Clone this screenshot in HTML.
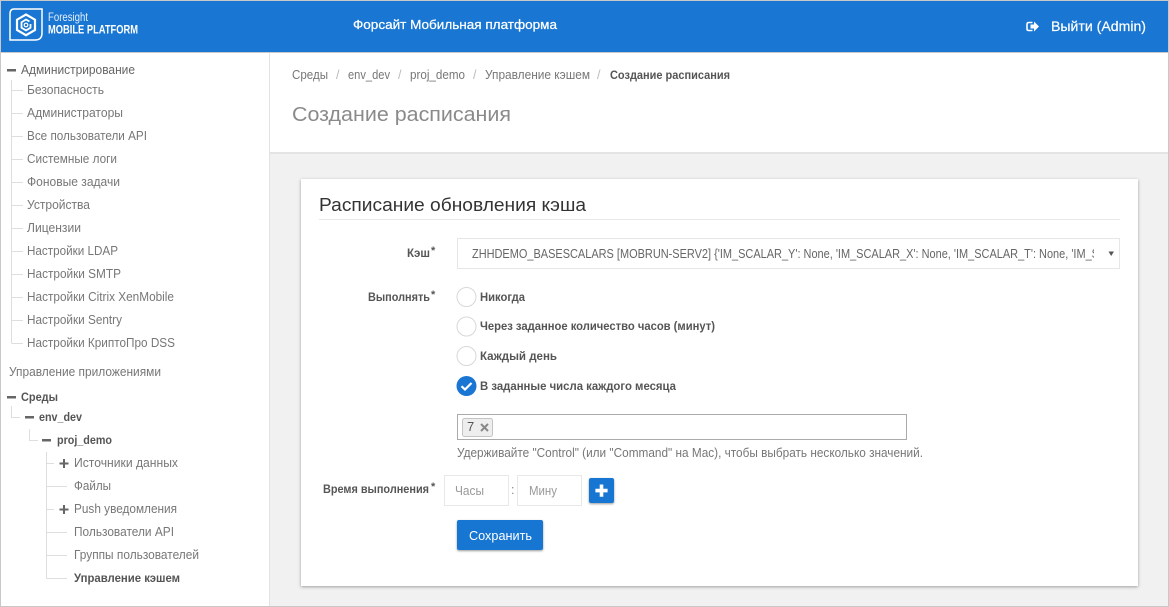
<!DOCTYPE html>
<html lang="ru">
<head>
<meta charset="utf-8">
<title>Создание расписания</title>
<style>
html,body{margin:0;padding:0;width:1169px;height:607px;overflow:hidden;background:#f1f1f1}
svg{display:block;position:absolute;left:0;top:0}
text{font-family:"Liberation Sans","Noto Sans CJK SC",sans-serif;font-size:12.5px;fill:#777;white-space:pre}
.b{font-weight:bold;fill:#555;font-size:12px}
.w{fill:#fff}
.l{stroke:#dedede;stroke-width:1;fill:none}
.m{fill:#666}
</style>
</head>
<body>
<svg width="1169" height="607" viewBox="0 0 1169 607" xmlns="http://www.w3.org/2000/svg">
<defs>
<clipPath id="sel"><rect x="472" y="240" width="622" height="28"/></clipPath>
<filter id="s1" x="-5%" y="-5%" width="110%" height="110%"><feDropShadow dx="0" dy="1" stdDeviation="1.500" flood-color="#000" flood-opacity=".35"/></filter>
<filter id="s2" x="-20%" y="-20%" width="140%" height="150%"><feDropShadow dx="0" dy="1" stdDeviation="1" flood-color="#000" flood-opacity=".4"/></filter>
</defs>

<!-- backgrounds -->
<rect width="1169" height="607" fill="#f1f1f1"/>
<rect x="270" y="53" width="899" height="99" fill="#fff"/>
<rect x="270" y="152" width="899" height="2" fill="#e4e4e4"/>
<rect x="0" y="53" width="270" height="554" fill="#fff"/>
<rect x="269" y="53" width="1" height="554" fill="#e2e2e2"/>
<rect x="0" y="1" width="1169" height="51" fill="#1976d2"/>
<rect x="0" y="52" width="1169" height="1" fill="#c9c9c9"/>

<!-- logo -->
<path d="M14 9H42V33Q42 40 35 40H10V14Q10 9 14 9Z" fill="none" stroke="#fff" stroke-width="1.500"/>
<path d="M26 14.500L35 19.700V30L26 35.200L17 30V19.700Z" fill="none" stroke="#fff" stroke-width="2.200"/>
<path d="M29.500 21.500L26 19.500L21.500 22.200V27.700L26 30.400L30.500 27.700V24" fill="none" stroke="#fff" stroke-width="1.800"/>
<circle cx="26" cy="25" r="1.800" fill="none" stroke="#fff" stroke-width="1.200"/>
<text x="48" y="21" class="w" style="font-size:11.500px;fill:#e3effa" textLength="40" lengthAdjust="spacingAndGlyphs">Foresight</text>
<text x="48" y="33.500" class="w" style="font-size:11.500px;font-weight:bold;fill:#fff" textLength="90" lengthAdjust="spacingAndGlyphs">MOBILE PLATFORM</text>

<!-- header -->
<text x="353" y="29" class="w" style="font-size:13px;stroke:#fff;stroke-width:.25" textLength="204" lengthAdjust="spacingAndGlyphs">Форсайт Мобильная платформа</text>
<path d="M1032.500 22.500H1028.800Q1027 22.500 1027 24.300V28.700Q1027 30.500 1028.800 30.500H1032.500" fill="none" stroke="#fff" stroke-width="1.600"/>
<path d="M1030.500 24.500H1034V21.500L1039 26.500L1034 31.500V28.500H1030.500Z" fill="#fff"/>
<text x="1051" y="31" class="w" style="font-size:14px;stroke:#fff;stroke-width:.2" textLength="95" lengthAdjust="spacingAndGlyphs">Выйти (Admin)</text>

<!-- sidebar tree lines -->
<path class="l" d="M11.500 80V343M11.500 90.500H23M11.500 113.500H23M11.500 136.500H23M11.500 159.500H23M11.500 182.500H23M11.500 205.500H23M11.500 228.500H23M11.500 251.500H23M11.500 274.500H23M11.500 297.500H23M11.500 320.500H23M11.500 343.500H23"/>
<path class="l" d="M11.500 406V417.500H20M29.500 429V440.500H38M46.500 452V578.500M46.500 463.500H54M46.500 486.500H67M46.500 509.500H54M46.500 532.500H67M46.500 555.500H67M46.500 578.500H67"/>
<rect class="m" x="7" y="69" width="9" height="2.500"/>
<rect class="m" x="7" y="396" width="9" height="2.500"/>
<rect class="m" x="25" y="416" width="9" height="2.500"/>
<rect class="m" x="42" y="439" width="9" height="2.500"/>
<path class="m" d="M63 459H65V462.500H68.500V464.500H65V468H63V464.500H59.500V462.500H63Z"/>
<path class="m" d="M63 505H65V508.500H68.500V510.500H65V514H63V510.500H59.500V508.500H63Z"/>

<!-- sidebar text -->
<text x="21" y="74" style="fill:#666" textLength="114" lengthAdjust="spacingAndGlyphs">Администрирование</text>
<text x="27" y="94" textLength="77" lengthAdjust="spacingAndGlyphs">Безопасность</text>
<text x="27" y="117" textLength="96" lengthAdjust="spacingAndGlyphs">Администраторы</text>
<text x="27" y="140" textLength="120" lengthAdjust="spacingAndGlyphs">Все пользователи API</text>
<text x="27" y="163" textLength="90" lengthAdjust="spacingAndGlyphs">Системные логи</text>
<text x="27" y="186" textLength="93" lengthAdjust="spacingAndGlyphs">Фоновые задачи</text>
<text x="27" y="209" textLength="63" lengthAdjust="spacingAndGlyphs">Устройства</text>
<text x="27" y="232" textLength="54" lengthAdjust="spacingAndGlyphs">Лицензии</text>
<text x="27" y="255" textLength="91" lengthAdjust="spacingAndGlyphs">Настройки LDAP</text>
<text x="27" y="278" textLength="94" lengthAdjust="spacingAndGlyphs">Настройки SMTP</text>
<text x="27" y="301" textLength="147" lengthAdjust="spacingAndGlyphs">Настройки Citrix XenMobile</text>
<text x="27" y="324" textLength="95" lengthAdjust="spacingAndGlyphs">Настройки Sentry</text>
<text x="27" y="347" textLength="148" lengthAdjust="spacingAndGlyphs">Настройки КриптоПро DSS</text>
<text x="9" y="376" textLength="152" lengthAdjust="spacingAndGlyphs">Управление приложениями</text>
<text x="21" y="401" class="b" textLength="37" lengthAdjust="spacingAndGlyphs">Среды</text>
<text x="39" y="421" class="b" textLength="43" lengthAdjust="spacingAndGlyphs">env_dev</text>
<text x="57" y="444" class="b" textLength="55" lengthAdjust="spacingAndGlyphs">proj_demo</text>
<text x="74" y="467" textLength="104" lengthAdjust="spacingAndGlyphs">Источники данных</text>
<text x="74" y="490" textLength="37" lengthAdjust="spacingAndGlyphs">Файлы</text>
<text x="74" y="513" textLength="103" lengthAdjust="spacingAndGlyphs">Push уведомления</text>
<text x="74" y="536" textLength="100" lengthAdjust="spacingAndGlyphs">Пользователи API</text>
<text x="74" y="559" textLength="125" lengthAdjust="spacingAndGlyphs">Группы пользователей</text>
<text x="74" y="582" class="b" textLength="106" lengthAdjust="spacingAndGlyphs">Управление кэшем</text>

<!-- breadcrumbs -->
<text x="292" y="79" textLength="36" lengthAdjust="spacingAndGlyphs">Среды</text>
<text x="336" y="79" style="fill:#bbb">/</text>
<text x="348" y="79" textLength="42" lengthAdjust="spacingAndGlyphs">env_dev</text>
<text x="398" y="79" style="fill:#bbb">/</text>
<text x="410" y="79" textLength="55" lengthAdjust="spacingAndGlyphs">proj_demo</text>
<text x="473" y="79" style="fill:#bbb">/</text>
<text x="485" y="79" textLength="105" lengthAdjust="spacingAndGlyphs">Управление кэшем</text>
<text x="597" y="79" style="fill:#bbb">/</text>
<text x="610" y="79" class="b" textLength="120" lengthAdjust="spacingAndGlyphs">Создание расписания</text>
<text x="292" y="121" style="font-size:20px;fill:#8a8a8a" textLength="219" lengthAdjust="spacingAndGlyphs">Создание расписания</text>

<!-- card -->
<rect x="301" y="179" width="837" height="407" fill="#fff" filter="url(#s1)"/>
<text x="319" y="211" style="font-size:18px;fill:#333" textLength="267" lengthAdjust="spacingAndGlyphs">Расписание обновления кэша</text>
<rect x="319" y="219" width="801" height="1" fill="#e8e8e8"/>

<!-- cache -->
<text x="407" y="257" class="b" textLength="23" lengthAdjust="spacingAndGlyphs">Кэш</text>
<text x="431" y="254" class="b" style="font-size:11px">*</text>
<rect x="457.500" y="238.500" width="662" height="30" fill="#fff" stroke="#e6e6e6"/>
<text x="472" y="258" clip-path="url(#sel)" style="fill:#666" textLength="627" lengthAdjust="spacingAndGlyphs">ZHHDEMO_BASESCALARS [MOBRUN-SERV2] {'IM_SCALAR_Y': None, 'IM_SCALAR_X': None, 'IM_SCALAR_T': None, 'IM_S</text>
<path d="M1108.500 251.500H1114L1111.200 256Z" fill="#555"/>

<!-- run -->
<text x="368" y="301" class="b" textLength="62" lengthAdjust="spacingAndGlyphs">Выполнять</text>
<text x="431" y="298" class="b" style="font-size:11px">*</text>
<circle cx="466.500" cy="297" r="9.500" fill="#fff" stroke="#d8d8d8"/>
<circle cx="466.500" cy="326.500" r="9.500" fill="#fff" stroke="#d8d8d8"/>
<circle cx="466.500" cy="356" r="9.500" fill="#fff" stroke="#d8d8d8"/>
<circle cx="466.500" cy="386" r="10" fill="#1976d2"/>
<path d="M461.500 386.200L465 389.500L471.500 383" fill="none" stroke="#fff" stroke-width="2.200"/>
<text x="480" y="301" class="b" textLength="45" lengthAdjust="spacingAndGlyphs">Никогда</text>
<text x="480" y="330" class="b" textLength="235" lengthAdjust="spacingAndGlyphs">Через заданное количество часов (минут)</text>
<text x="480" y="360" class="b" textLength="77" lengthAdjust="spacingAndGlyphs">Каждый день</text>
<text x="480" y="390" class="b" textLength="196" lengthAdjust="spacingAndGlyphs">В заданные числа каждого месяца</text>

<!-- multi select -->
<rect x="457.500" y="414.500" width="449" height="25" fill="#fff" stroke="#aaa"/>
<rect x="462.500" y="418.500" width="30" height="18" rx="2" fill="#eee" stroke="#c4c4c4"/>
<text x="467" y="431" style="fill:#555;font-size:13px">7</text>
<path d="M481 424L488 431M488 424L481 431" stroke="#888" stroke-width="2" fill="none"/>
<text x="457" y="457" textLength="466" lengthAdjust="spacingAndGlyphs">Удерживайте "Control" (или "Command" на Mac), чтобы выбрать несколько значений.</text>

<!-- time -->
<text x="323" y="493" class="b" textLength="106" lengthAdjust="spacingAndGlyphs">Время выполнения</text>
<text x="431" y="490" class="b" style="font-size:11px">*</text>
<rect x="444.500" y="475.500" width="64" height="30" fill="#fff" stroke="#e8e8e8"/>
<rect x="517.500" y="475.500" width="64" height="30" fill="#fff" stroke="#e8e8e8"/>
<text x="455" y="495" style="fill:#999" textLength="29" lengthAdjust="spacingAndGlyphs">Часы</text>
<text x="529" y="495" style="fill:#999" textLength="28" lengthAdjust="spacingAndGlyphs">Мину</text>
<text x="511" y="494" style="fill:#888">:</text>
<rect x="589" y="478" width="25" height="25" rx="2" fill="#1976d2" filter="url(#s2)"/>
<path d="M599.700 484.500H603.300V488.800H607.600V492.400H603.300V496.700H599.700V492.400H595.400V488.800H599.700Z" fill="#fff"/>
<rect x="457" y="520" width="86" height="30" rx="2" fill="#1976d2" filter="url(#s2)"/>
<text x="469" y="540" class="w" style="font-size:13px" textLength="63" lengthAdjust="spacingAndGlyphs">Сохранить</text>

<!-- screenshot frame -->
<rect x="0.500" y="0.500" width="1168" height="606" fill="none" stroke="#c8c8c8"/>
</svg>
</body>
</html>
